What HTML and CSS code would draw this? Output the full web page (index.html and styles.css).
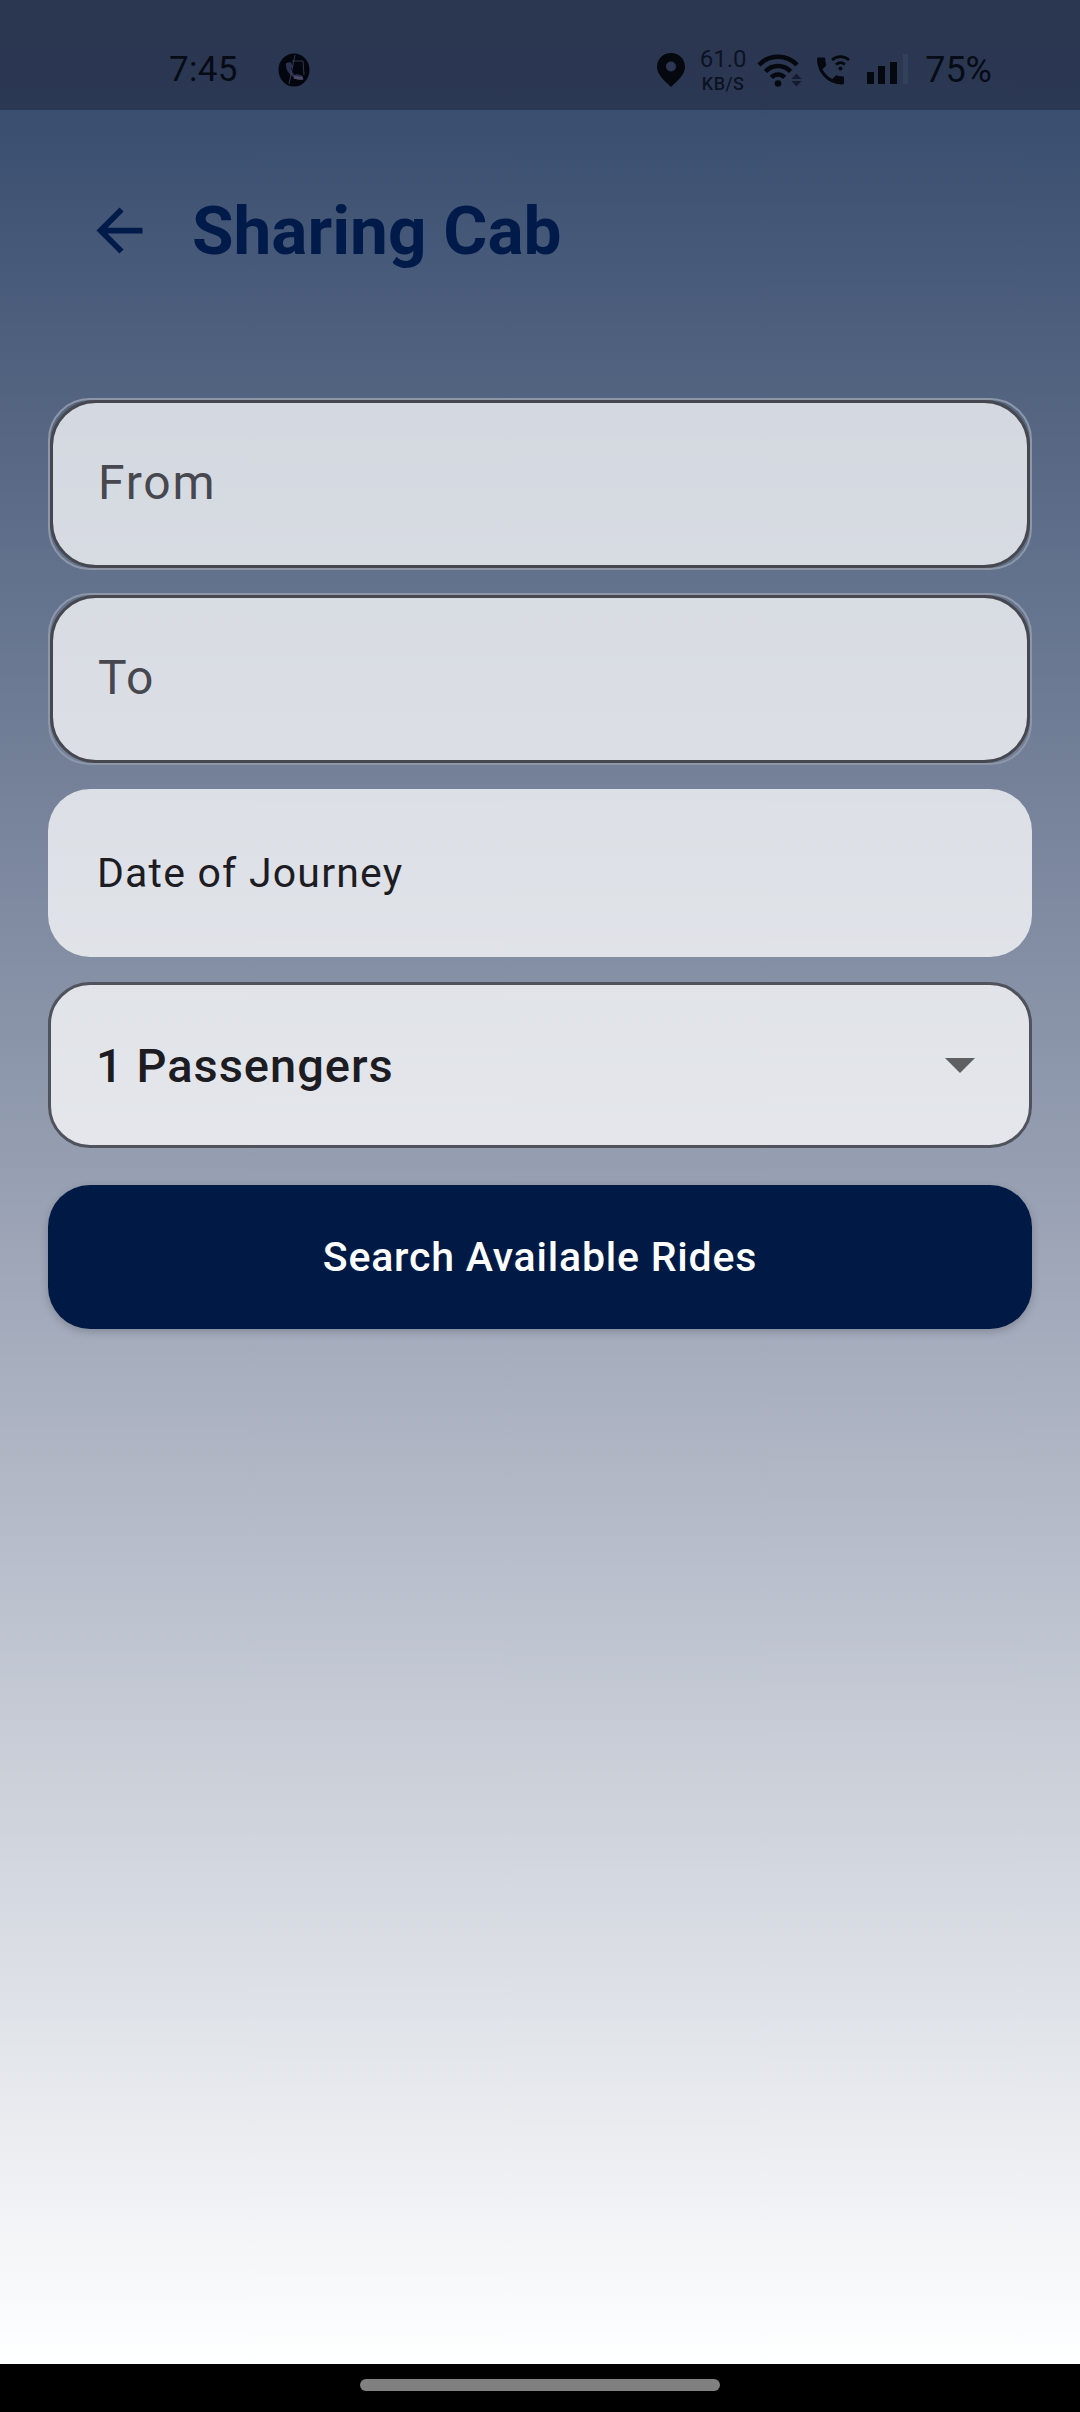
FILE: index.html
```html
<!DOCTYPE html>
<html lang="en">

<head>
    <meta charset="UTF-8">
    <meta name="viewport" content="width=device-width, initial-scale=1.0">
    <title>Sharing Cab</title>
    <link rel="stylesheet" href="styles.css">
</head>

<body>

    <!-- Status bar -->
    <div class="status-bar">
        <span class="time">7:45</span>
        <svg class="call-badge" width="32" height="34" viewBox="0 0 32 34">
            <ellipse cx="16" cy="17" rx="15.5" ry="16.5" fill="#03060f" />
            <path d="M8 10c-1 6 3 12 9 15l6 2 2-4-6-2-2 1c-2-1-4-4-4-7l2-1-2-5z" fill="#2a3150" />
            <path d="M17 2l-6 29" stroke="#3d4460" stroke-width="0.8" fill="none" />
            <path d="M14 8h11l1 14" stroke="#3d4460" stroke-width="0.8" fill="none" />
            <path d="M16 24c3 1 6 2 9 1" stroke="#4d4a68" stroke-width="3" fill="none" />
        </svg>
        <div class="status-right">
            <svg class="pin" width="28" height="34" viewBox="0 0 28 34">
                <path fill-rule="evenodd" d="M14 0C6 0 0 6 0 14c0 8 8 14 14 20 6-6 14-12 14-20C28 6 22 0 14 0zm0 8.500a5 5 0 1 1 0 10 5 5 0 0 1 0-10z" fill="#05080f" />
            </svg>
            <div class="speed">
                <span class="speed-value">61.0</span>
                <span class="speed-unit">KB/S</span>
            </div>
            <svg class="wifi" width="46" height="34" viewBox="0 0 46 34">
                <g fill="none" stroke="#05080f" stroke-width="4.500">
                    <path d="M2 12C12 1 30 1 40 12" />
                    <path d="M8.500 18.500C15 11 27 11 33.500 18.500" />
                    <path d="M14.500 24.500C18 20.500 24 20.500 27.500 24.500" />
                </g>
                <circle cx="21" cy="30.500" r="3.300" fill="#05080f" />
                <path d="M34.500 26l5-5.500 5 5.500zM34.500 28l5 5.500 5-5.500z" fill="#141b2c" />
            </svg>
            <svg class="call-wifi" width="38" height="32" viewBox="0 0 38 32">
                <path transform="translate(-3.500 -1) scale(1.5)" d="M6.620 10.790c1.440 2.830 3.760 5.140 6.590 6.590l2.200-2.200c.27-.27.67-.36 1.020-.24 1.120.37 2.330.57 3.570.57.55 0 1 .45 1 1V20c0 .55-.45 1-1 1-9.390 0-17-7.610-17-17 0-.55.45-1 1-1h3.500c.55 0 1 .45 1 1 0 1.250.2 2.450.57 3.570.11.35.03.74-.25 1.020l-2.200 2.200z" fill="#05080f" />
                <g fill="none" stroke="#05080f" stroke-width="2.600">
                    <path d="M16 6c5-4.500 12-4.500 17 0" />
                    <path d="M20 10.500c3-2.500 6-2.500 9 0" />
                </g>
                <circle cx="24.500" cy="14.500" r="2" fill="#05080f" />
            </svg>
            <svg class="signal" width="42" height="31" viewBox="0 0 42 31">
                <rect x="1" y="18" width="7" height="12" fill="#05080f" />
                <rect x="12" y="12" width="7" height="18" fill="#05080f" />
                <rect x="24" y="8" width="7" height="22" fill="#05080f" />
                <rect x="37" y="0" width="5" height="30" fill="#33405a" />
            </svg>
            <span class="battery">75%</span>
        </div>
    </div>

    <div class="screen">
        <!-- Header -->
        <div class="header">
            <svg class="back-icon" width="69" height="69" viewBox="0 0 24 24">
                <path d="M20 11H7.830l5.590-5.590L12 4l-8 8 8 8 1.410-1.410L7.830 13H20v-2z" fill="#001a4a" />
            </svg>
            <h1 class="title">Sharing Cab</h1>
        </div>

        <!-- Search form -->
        <form class="ride-form">
            <div class="field-frame">
                <div class="field-inner">From</div>
            </div>
            <div class="field-frame">
                <div class="field-inner">To</div>
            </div>
            <div class="date-field">Date of Journey</div>
            <div class="passenger-field">
                <span>1 Passengers</span>
                <span class="caret"></span>
            </div>
            <button type="button" class="search-btn">Search Available Rides</button>
        </form>
    </div>

    <!-- Gesture bar -->
    <div class="nav-bar">
        <div class="home-pill"></div>
    </div>

</body>

</html>
```

FILE: styles.css
```css
/* General Styles */
html,
body {
    height: 100%;
    margin: 0;
}

body {
    display: flex;
    flex-direction: column;
    width: 1080px;
    height: 2412px;
    overflow: hidden;
    font-family: Roboto, sans-serif;
}

/* Status bar */
.status-bar {
    height: 110px;
    flex-shrink: 0;
    display: flex;
    align-items: center;
    padding: 29px 88px 0 169px;
    box-sizing: border-box;
    background: linear-gradient(#2b3650, #2b3853);
    color: #070b15;
}

.time {
    font-size: 35px;
    letter-spacing: 0.3px;
}

.call-badge {
    margin-left: 40px;
}

.status-right {
    margin-left: auto;
    display: flex;
    align-items: center;
}

.speed {
    display: flex;
    flex-direction: column;
    align-items: center;
    margin-left: 15px;
    width: 46px;
    color: #0c1322;
}

.speed-value {
    font-size: 24px;
}

.speed-unit {
    font-size: 18px;
    font-weight: 500;
    letter-spacing: 0.5px;
}

.wifi {
    margin-left: 11px;
}

.call-wifi {
    margin-left: 13px;
}

.signal {
    margin-left: 12px;
}

.battery {
    margin-left: 17px;
    font-size: 36px;
}

/* Main area */
.screen {
    flex: 1;
    background: linear-gradient(#3a4e6f, #9ca4b6 50%, #feffff);
}

.header {
    height: 240px;
    display: flex;
    align-items: center;
    padding-left: 85px;
}

.title {
    margin: 0 0 0 38px;
    font-size: 67.5px;
    font-weight: 700;
    color: #001a4a;
}

.back-icon {
    flex-shrink: 0;
}

.ride-form {
    display: flex;
    flex-direction: column;
    gap: 23px;
    padding: 48px 48px 0;
}

.field-frame {
    height: 172px;
    box-sizing: border-box;
    border: 2px solid #8d97a8;
    border-radius: 42px;
    display: flex;
}

.field-inner {
    flex: 1;
    display: flex;
    align-items: center;
    padding: 0 0 4px 45px;
    border: 3px solid #47484f;
    border-radius: 46px;
    background: rgba(255, 255, 255, 0.75);
    font-size: 48px;
    letter-spacing: 1.8px;
    color: #47484f;
}

.date-field {
    height: 168px;
    margin-top: 1px;
    display: flex;
    align-items: center;
    padding-left: 49px;
    border-radius: 42px;
    background: rgba(255, 255, 255, 0.75);
    font-size: 41px;
    letter-spacing: 1.2px;
    color: #1c1c22;
}

.passenger-field {
    height: 166px;
    margin-top: 2px;
    box-sizing: border-box;
    display: flex;
    align-items: center;
    justify-content: space-between;
    padding: 0 54px 0 45px;
    border: 3px solid #50525c;
    border-radius: 42px;
    background: rgba(255, 255, 255, 0.75);
    font-size: 47px;
    font-weight: 500;
    letter-spacing: 1px;
    color: #1c1c22;
}

.caret {
    width: 0;
    height: 0;
    border-left: 15px solid transparent;
    border-right: 15px solid transparent;
    border-top: 15px solid #5f5f63;
}

.search-btn {
    height: 144px;
    margin-top: 14px;
    border: none;
    border-radius: 42px;
    background-color: #001a46;
    box-shadow: 0 3px 8px rgba(0, 0, 0, 0.2);
    font-family: Roboto, sans-serif;
    font-size: 41px;
    font-weight: 500;
    letter-spacing: 0.8px;
    color: #fff;
}

/* Gesture bar */
.nav-bar {
    height: 48px;
    flex-shrink: 0;
    display: flex;
    justify-content: center;
    padding-top: 15px;
    box-sizing: border-box;
    background: #000;
}

.home-pill {
    width: 360px;
    height: 12px;
    border-radius: 6px;
    background: #808080;
}
```
